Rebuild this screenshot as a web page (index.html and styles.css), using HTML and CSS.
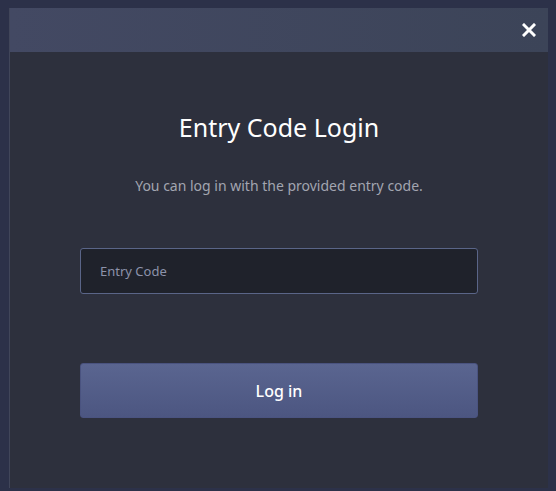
FILE: index.html
```html
<!DOCTYPE html>
<html lang="en">
<head>
<meta charset="utf-8">
<title>Entry Code Login</title>
<link rel="stylesheet" href="styles.css">
</head>
<body>
<div class="modal">
  <div class="modal-header">
    <button class="close" aria-label="Close">
      <svg width="14" height="14" viewBox="0 0 14 14"><path d="M2 2L12 12M12 2L2 12" stroke="#ffffff" stroke-width="3" stroke-linecap="square"/></svg>
    </button>
  </div>
  <div class="modal-body">
    <h1 class="title">Entry Code Login</h1>
    <p class="subtitle">You can log in with the provided entry code.</p>
    <input class="code-input" type="text" placeholder="Entry Code">
    <button class="login-btn">Log in</button>
  </div>
</div>
</body>
</html>
```
FILE: styles.css
```css
* { box-sizing: border-box; }
html, body { margin: 0; height: 100%; }
body {
  background: #2c3149;
  padding: 8px 8px 3px 9px;
  font-family: "Noto Sans", "Open Sans", sans-serif;
}
.modal {
  height: 480px;
  background: #2d303d;
  border-left: 1px solid #41465a;
  display: flex;
  flex-direction: column;
}
.modal-header {
  height: 44px;
  background: linear-gradient(90deg, #434963 0%, #3c4458 100%);
  display: flex;
  justify-content: flex-end;
  align-items: center;
  padding-right: 12px;
}
.close {
  background: none;
  border: 0;
  padding: 0;
  width: 14px;
  height: 14px;
  display: flex;
  cursor: pointer;
}
.modal-body {
  padding: 59px 70px 0;
  display: flex;
  flex-direction: column;
  align-items: stretch;
}
.title {
  margin: 0;
  font-size: 25px;
  line-height: 32px;
  font-weight: 400;
  color: #ffffff;
  text-align: center;
}
.subtitle {
  margin: 33px 0 0;
  font-size: 14px;
  line-height: 20px;
  color: #a2a5b0;
  text-align: center;
}
.code-input {
  margin-top: 52px;
  height: 46px;
  background: #1f222b;
  border: 1px solid #5a6588;
  border-radius: 3px;
  padding: 0 19px;
  font-family: inherit;
  font-size: 13px;
  color: #ffffff;
  outline: none;
}
.code-input::placeholder { color: #8c92aa; }
.login-btn {
  margin-top: 69px;
  height: 55px;
  background: linear-gradient(180deg, #5a6590 0%, #4c5681 100%);
  border: 1px solid #4a5380;
  border-radius: 3px;
  color: #ffffff;
  font-family: inherit;
  font-size: 16px;
  font-weight: 500;
  cursor: pointer;
}
```
